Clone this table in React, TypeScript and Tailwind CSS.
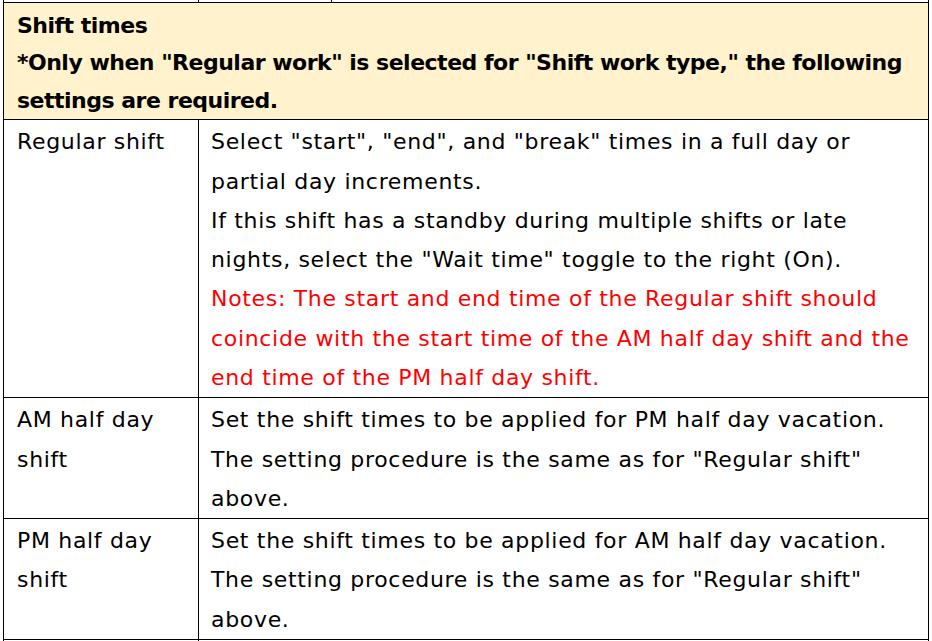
import React from "react";

const font = { fontFamily: '"DejaVu Sans", Verdana, sans-serif' };

function Row({ label, children }: { label: React.ReactNode; children: React.ReactNode }) {
  return (
    <div className="flex border-b border-black">
      <div className="w-[195px] shrink-0 border-r border-black pl-[13px] pt-[2px]">{label}</div>
      <div className="flex-1 pl-[12px] pt-[2px] whitespace-nowrap">{children}</div>
    </div>
  );
}

export default function App() {
  return (
    <div className="w-[932px] h-[641px] overflow-hidden bg-white text-black" style={font}>
      <div className="ml-[3px] w-[926px] border-l border-r border-black text-[22px] leading-[39.3px] tracking-[0.68px]">
        <div className="flex h-[3px] border-b border-black">
          <div className="w-[195px] border-r border-black" />
          <div className="w-[133px] border-r border-black" />
        </div>
        <div className="bg-[#fff2cc] border-b border-black pl-[13px] pt-[4px] font-bold leading-[37.4px] tracking-[-0.5px] whitespace-nowrap">
          <div>Shift times</div>
          <div>*Only when "Regular work" is selected for "Shift work type," the following</div>
          <div>settings are required.</div>
        </div>
        <Row label={<>Regular shift</>}>
          <div>Select "start", "end", and "break" times in a full day or</div>
          <div>partial day increments.</div>
          <div>If this shift has a standby during multiple shifts or late</div>
          <div>nights, select the "Wait time" toggle to the right (On).</div>
          <div className="text-[#ff0000]">
            Notes: The start and end time of the Regular shift should
            <br />
            coincide with the start time of the AM half day shift and the
            <br />
            end time of the PM half day shift.
          </div>
        </Row>
        <Row label={<>AM half day<br />shift</>}>
          <div>Set the shift times to be applied for PM half day vacation.</div>
          <div>The setting procedure is the same as for "Regular shift"</div>
          <div>above.</div>
        </Row>
        <Row label={<>PM half day<br />shift</>}>
          <div>Set the shift times to be applied for AM half day vacation.</div>
          <div>The setting procedure is the same as for "Regular shift"</div>
          <div>above.</div>
        </Row>
        <div className="flex h-[40px]">
          <div className="w-[195px] border-r border-black" />
        </div>
      </div>
    </div>
  );
}
